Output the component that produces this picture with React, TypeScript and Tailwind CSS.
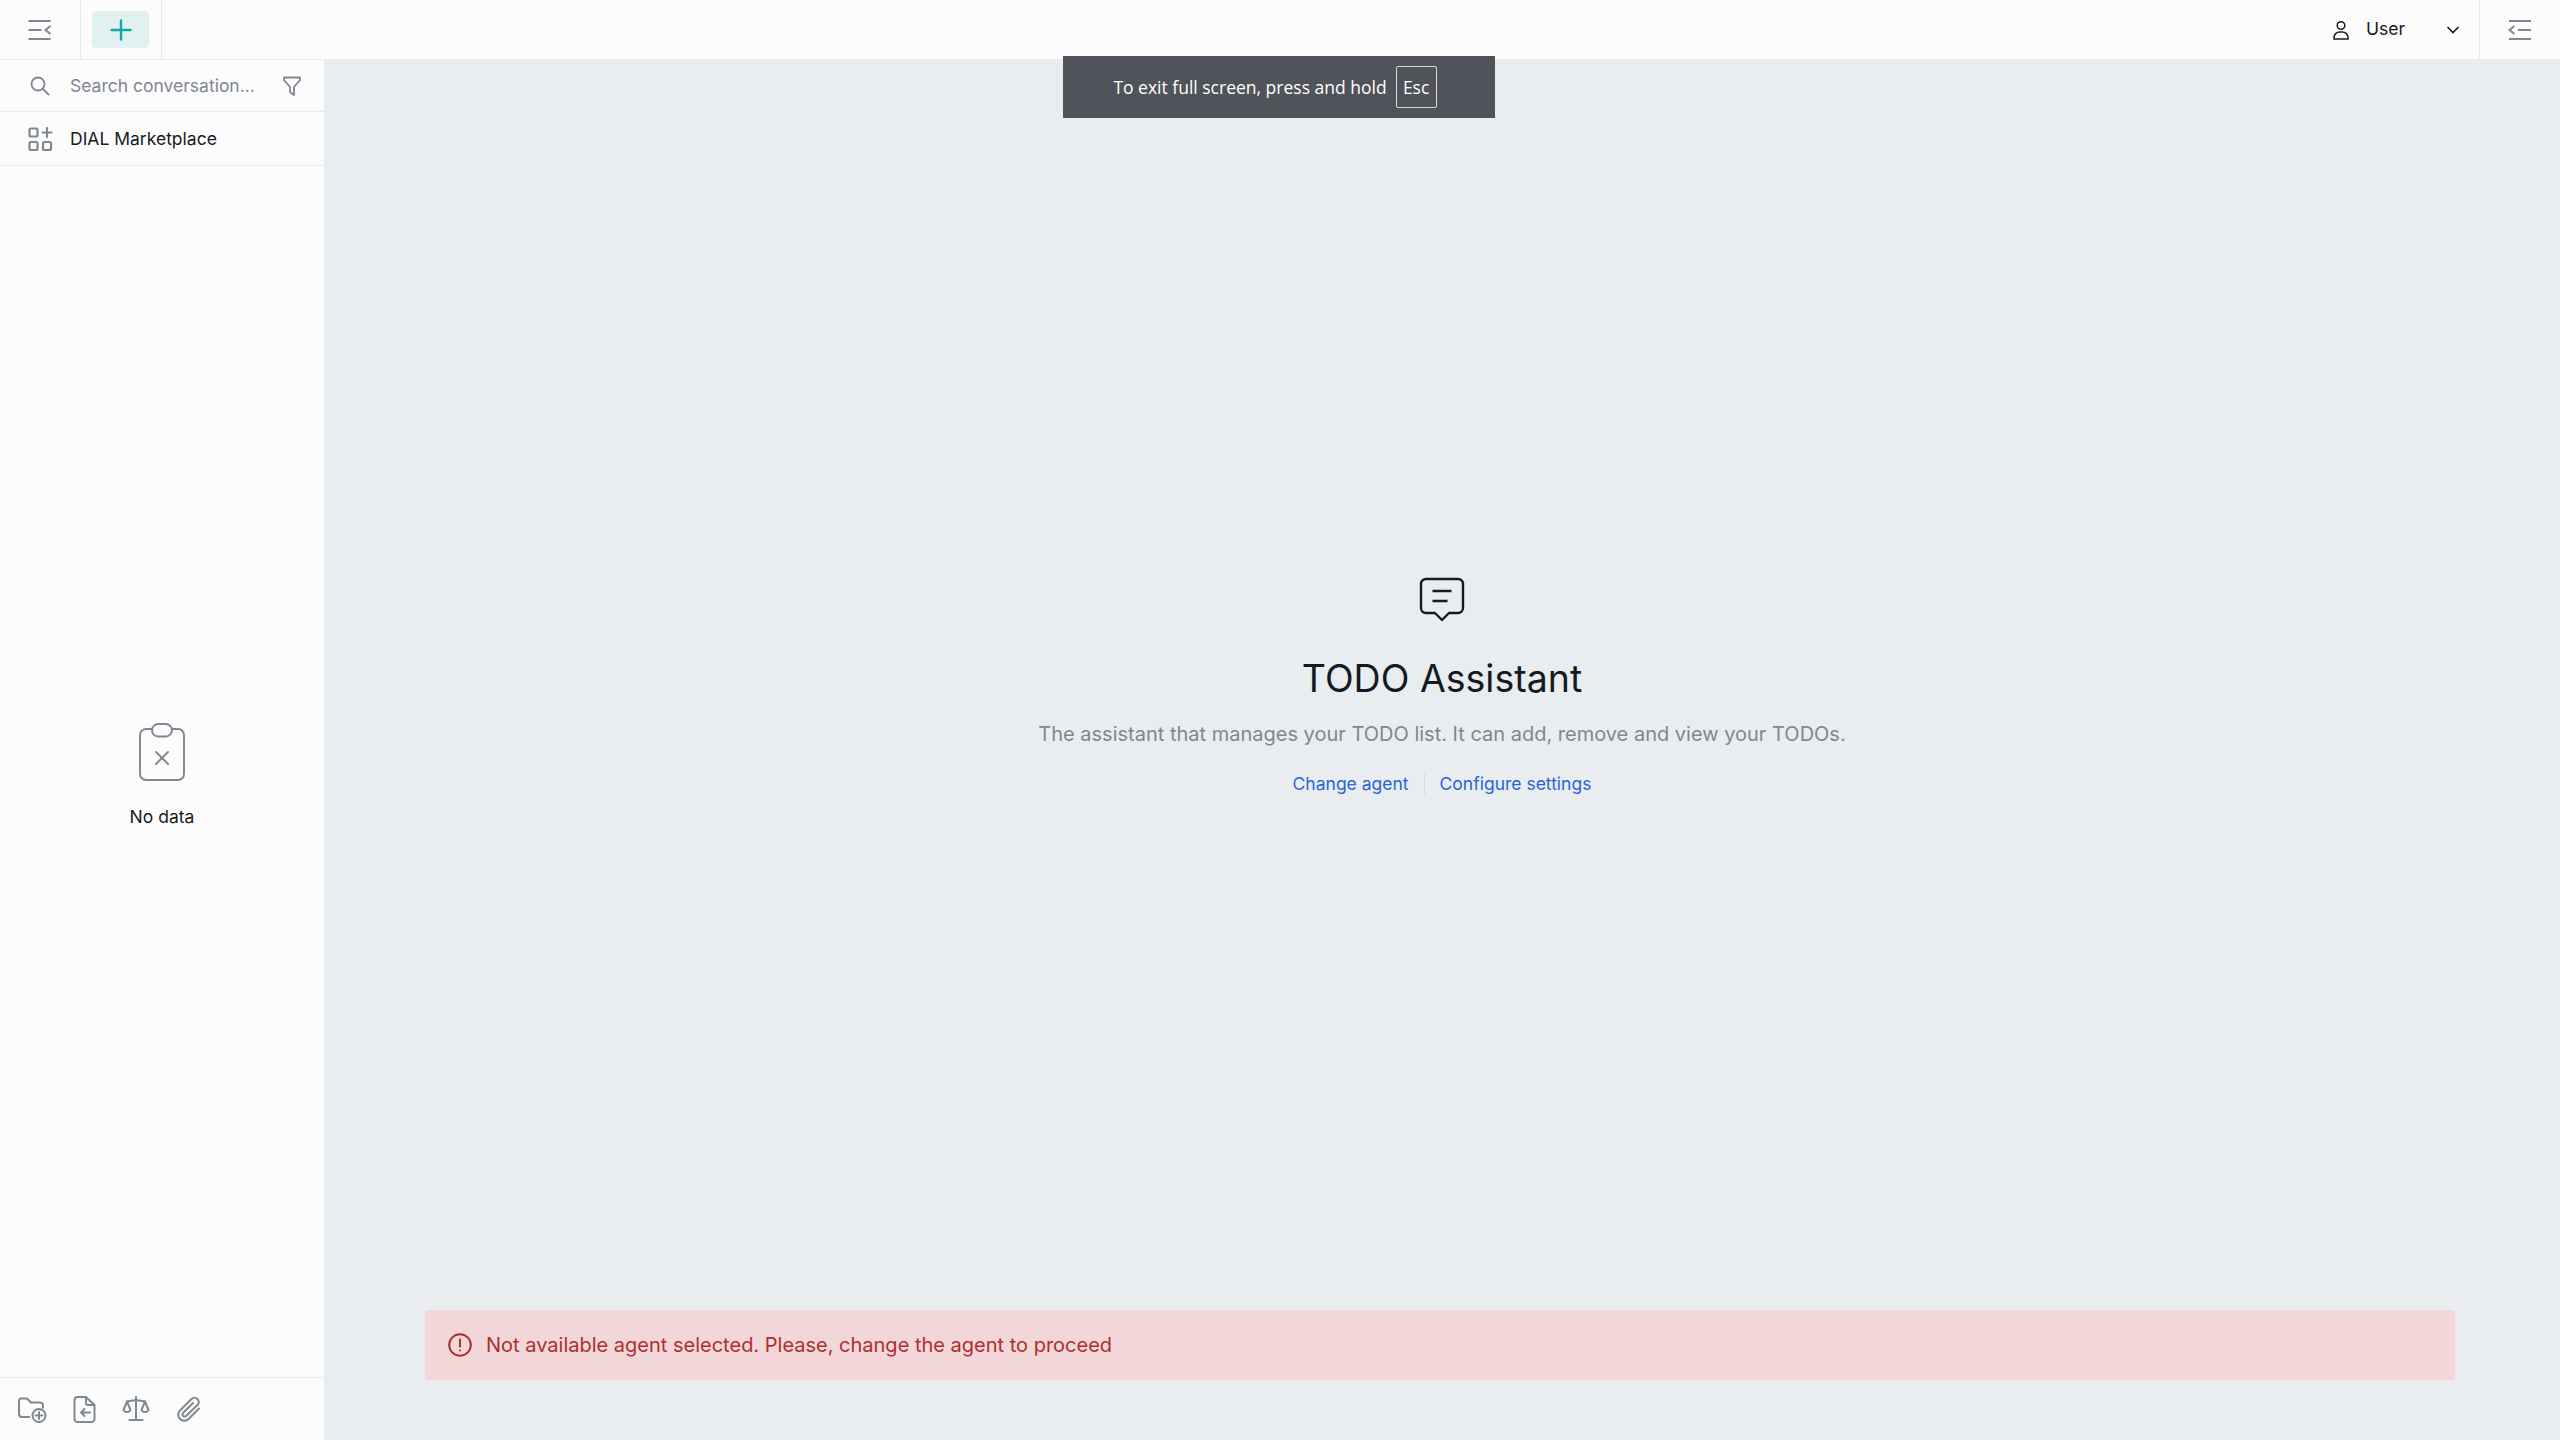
const iconGray = "#7f8792"

function MenuLeftIcon() {
  return (
    <svg width="30" height="30" viewBox="0 0 30 30" fill="none" stroke={iconGray} strokeWidth="2.2">
      <path d="M3.500 6h22M3.500 15h13M3.500 24h22" />
      <path d="M25.500 11l-5 4 5 4" strokeWidth="2" />
    </svg>
  )
}

function MenuRightIcon() {
  return (
    <svg width="30" height="30" viewBox="0 0 30 30" fill="none" stroke={iconGray} strokeWidth="2.2">
      <path d="M4 6h22M13 15h13M4 24h22" />
      <path d="M9.500 11l-5 4 5 4" strokeWidth="2" />
    </svg>
  )
}

function PlusIcon() {
  return (
    <svg width="30" height="30" viewBox="0 0 30 30" fill="none" stroke="#14a8a5" strokeWidth="2.4" strokeLinecap="round">
      <path d="M15 5.500v19M5.500 15h19" />
    </svg>
  )
}

function SearchIcon() {
  return (
    <svg width="24" height="24" viewBox="0 0 24 24" fill="none" stroke={iconGray} strokeWidth="1.8" strokeLinecap="round">
      <circle cx="10" cy="10" r="6.500" />
      <path d="M15 15l5.500 5.500" />
    </svg>
  )
}

function FilterIcon() {
  return (
    <svg width="24" height="24" viewBox="0 0 24 24" fill="none" stroke={iconGray} strokeWidth="1.8" strokeLinejoin="round">
      <path d="M4 3.500h16v2.500l-6 7v8l-4-3v-5L4 6z" />
    </svg>
  )
}

function GridPlusIcon() {
  return (
    <svg width="30" height="30" viewBox="0 0 30 30" fill="none" stroke={iconGray} strokeWidth="2.2" strokeLinecap="round">
      <rect x="4.500" y="4.500" width="8" height="8" rx="1.500" />
      <rect x="4.500" y="18" width="8" height="8" rx="1.500" />
      <rect x="18" y="18" width="8" height="8" rx="1.500" />
      <path d="M22 4v9M17.500 8.500h9" />
    </svg>
  )
}

function ClipboardXIcon() {
  return (
    <svg width="46" height="58" viewBox="0 0 46 58" fill="none" stroke={iconGray} strokeWidth="1.900">
      <path d="M13 6H7a6 6 0 0 0-6 6v39a6 6 0 0 0 6 6h32a6 6 0 0 0 6-6V12a6 6 0 0 0-6-6h-6" />
      <rect x="13" y="1" width="20" height="12.500" rx="6.200" />
      <path d="M17 29l12 12M29 29L17 41" strokeLinecap="round" />
    </svg>
  )
}

function FolderPlusIcon() {
  return (
    <svg width="30" height="30" viewBox="0 0 30 30" fill="none" stroke={iconGray} strokeWidth="2" strokeLinejoin="round">
      <path d="M13 23H5a3 3 0 0 1-3-3V6.500a2 2 0 0 1 2-2h6l4 4h9a3 3 0 0 1 3 3v3" />
      <circle cx="22" cy="21.500" r="6.500" />
      <path d="M22 18v7M18.500 21.500h7" strokeLinecap="round" />
    </svg>
  )
}

function FileImportIcon() {
  return (
    <svg width="30" height="30" viewBox="0 0 30 30" fill="none" stroke={iconGray} strokeWidth="2" strokeLinejoin="round">
      <path d="M17 3H8.500a3 3 0 0 0-3 3v19a3 3 0 0 0 3 3h14a3 3 0 0 0 3-3V11z" />
      <path d="M17 3v6a2 2 0 0 0 2 2h6.500" />
      <path d="M21 18.500h-9M15.500 15l-3.500 3.500 3.500 3.500" strokeLinecap="round" />
    </svg>
  )
}

function ScaleIcon() {
  return (
    <svg width="30" height="30" viewBox="0 0 30 30" fill="none" stroke={iconGray} strokeWidth="2" strokeLinecap="round" strokeLinejoin="round">
      <path d="M15 3v23M8.500 26h13M6 7.500l9-1.500 9 1.500" />
      <path d="M6 7.500L2.500 16a4 4 0 0 0 7 0z" />
      <path d="M24 7.500L20.500 16a4 4 0 0 0 7 0z" />
    </svg>
  )
}

function PaperclipIcon() {
  return (
    <svg width="30" height="30" viewBox="0 0 30 30" fill="none" stroke={iconGray} strokeWidth="2" strokeLinecap="round" strokeLinejoin="round">
      <path d="M26 14.500L15.500 25A6 6 0 0 1 7 16.500L18.500 5a4 4 0 0 1 6 6L13 22a2 2 0 0 1-3-3L20 9" />
    </svg>
  )
}

function UserIcon() {
  return (
    <svg width="18" height="20" viewBox="0 0 18 20" fill="none" stroke="#141a23" strokeWidth="1.500">
      <circle cx="9" cy="5.500" r="3.800" />
      <path d="M2 19v-1.500A5.500 5.500 0 0 1 7.500 12h3a5.500 5.500 0 0 1 5.500 5.500V19z" />
    </svg>
  )
}

function ChevronIcon() {
  return (
    <svg width="14" height="10" viewBox="0 0 14 10" fill="none" stroke="#141a23" strokeWidth="1.600">
      <path d="M1.500 2l5.500 5.500L12.500 2" />
    </svg>
  )
}

function ChatIcon() {
  return (
    <svg width="46" height="46" viewBox="0 0 46 46" fill="none" stroke="#141a23" strokeWidth="2.400" strokeLinejoin="round">
      <path d="M7 2h32a5 5 0 0 1 5 5v24a5 5 0 0 1-5 5h-9l-7 7-7-7H7a5 5 0 0 1-5-5V7a5 5 0 0 1 5-5z" />
      <path d="M13.500 14h19M13.500 24h15" />
    </svg>
  )
}

function AlertIcon() {
  return (
    <svg width="24" height="24" viewBox="0 0 24 24" fill="none" stroke="#ae2f2f" strokeWidth="2" strokeLinecap="round">
      <circle cx="12" cy="12" r="10.800" />
      <path d="M12 6.500v7M12 17.500v.1" />
    </svg>
  )
}

export default function App() {
  return (
    <div className="relative flex h-[1440px] w-[2560px] flex-col overflow-hidden bg-[#eaedf0] font-['Inter',sans-serif] text-[17.5px] text-[#141a23]">
      <header className="flex h-[60px] shrink-0 items-stretch border-b border-[#e8ebee] bg-[#fcfcfc]">
        <div className="flex w-[81px] items-center justify-center border-r border-[#e8ebee]">
          <MenuLeftIcon />
        </div>
        <div className="flex w-[81px] items-center justify-center border-r border-[#e8ebee]">
          <div className="-ml-[1px] flex h-[37px] w-[57px] items-center justify-center rounded-[4px] bg-[#e1f1f2]">
            <PlusIcon />
          </div>
        </div>
        <div className="flex flex-1 items-center justify-end pr-[19px]">
          <UserIcon />
          <span className="ml-[16px] w-[80px]">User</span>
          <ChevronIcon />
        </div>
        <div className="flex w-[81px] items-center justify-center border-l border-[#e8ebee]">
          <MenuRightIcon />
        </div>
      </header>

      <div className="flex min-h-0 flex-1">
        <aside className="flex w-[324px] shrink-0 flex-col bg-[#fcfcfc]">
          <div className="flex h-[52px] items-center border-b border-[#e8ebee] pl-[28px] pr-[20px] pt-[1px]">
            <SearchIcon />
            <span className="ml-[18px] flex-1 text-[#7f8792]">Search conversation...</span>
            <FilterIcon />
          </div>
          <div className="flex h-[54px] items-center gap-[15px] border-b border-[#e8ebee] pl-[25px] pt-[1px]">
            <GridPlusIcon />
            <span>DIAL Marketplace</span>
          </div>
          <div className="flex flex-1 flex-col items-center justify-center gap-[23px] pt-[10px]">
            <ClipboardXIcon />
            <span>No data</span>
          </div>
          <div className="flex h-[63px] items-center gap-[22px] border-t border-[#e8ebee] pl-[17px]">
            <FolderPlusIcon />
            <FileImportIcon />
            <ScaleIcon />
            <PaperclipIcon />
          </div>
        </aside>

        <main className="flex min-w-0 flex-1 flex-col">
          <div className="flex flex-1 flex-col items-center justify-center pt-[4px]">
            <ChatIcon />
            <h1 className="mt-[32px] text-[37.5px] leading-[48px]">TODO Assistant</h1>
            <p className="mt-[16px] text-[20px] leading-[30px] text-[#7f8792]">
              The assistant that manages your TODO list. It can add, remove and view your TODOs.
            </p>
            <div className="mt-[22px] flex items-center text-[#2764d9]">
              <span>Change agent</span>
              <span className="mx-[15px] h-[20px] w-px bg-[#d5d9de]" />
              <span>Configure settings</span>
            </div>
          </div>
          <div className="pb-[60px] pl-[101px] pr-[105px]">
            <div className="flex h-[70px] items-center gap-[14px] rounded-[4px] bg-[#f3d6d8] pl-[23px] text-[20px] text-[#ae2f2f]">
              <AlertIcon />
              <span>Not available agent selected. Please, change the agent to proceed</span>
            </div>
          </div>
        </main>
      </div>

      <div className="absolute left-[1063px] top-[56px] flex h-[62px] w-[432px] items-center justify-center gap-[9px] bg-[#50535a] pr-[8px] font-['Open_Sans',sans-serif] text-[17.5px] text-white">
        <span>To exit full screen, press and hold</span>
        <span className="flex h-[42px] w-[41px] items-center justify-center rounded-[2px] border border-[#d8d9db] text-[17.5px]">Esc</span>
      </div>
    </div>
  )
}
